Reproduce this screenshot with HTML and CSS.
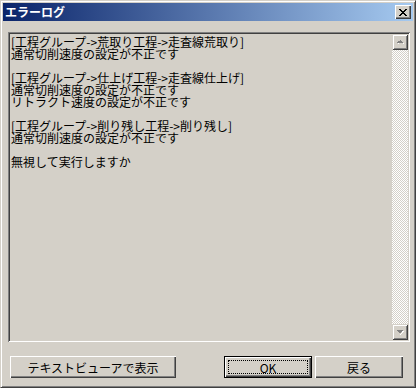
FILE: index.html
```html
<!DOCTYPE html>
<html lang="ja">
<head>
<title>エラーログ</title>
<meta http-equiv="Content-Type" content="text/html; charset=utf-8" />
<link rel="stylesheet" href="styles.css">
</head>
<body>
<div class="window">
	<div class="title">
		<span class="caption">エラーログ</span>
		<span class="close">
			<svg width="8" height="7" viewBox="0 0 8 7" shape-rendering="crispEdges"><path fill="#000" d="M0 0h2v1h-2zM6 0h2v1h-2zM1 1h2v1h-2zM5 1h2v1h-2zM2 2h2v1h-2zM4 2h2v1h-2zM3 3h2v1h-2zM2 4h2v1h-2zM4 4h2v1h-2zM1 5h2v1h-2zM5 5h2v1h-2zM0 6h2v1h-2zM6 6h2v1h-2z"/></svg>
		</span>
	</div>
	<div class="body">
		<div class="log">
			<div class="text">
				<p>[工程グループ-&gt;荒取り工程-&gt;走査線荒取り]<br>通常切削速度の設定が不正です</p>
				<p>[工程グループ-&gt;仕上げ工程-&gt;走査線仕上げ]<br>通常切削速度の設定が不正です<br>リトラクト速度の設定が不正です</p>
				<p>[工程グループ-&gt;削り残し工程-&gt;削り残し]<br>通常切削速度の設定が不正です</p>
				<p>無視して実行しますか</p>
			</div>
			<div class="scroll">
				<span class="arrow">
					<svg width="7" height="5" viewBox="0 0 7 5" shape-rendering="crispEdges"><path fill="#fff" d="M4 1h1v1h1v1h1v1h-6v-1h1v1h4v-1h-1z"/><path fill="#808080" d="M3 0h1v1h1v1h1v1h-6v-1h1v-1h1z"/></svg>
				</span>
				<span class="track"></span>
				<span class="arrow">
					<svg width="7" height="5" viewBox="0 0 7 5" shape-rendering="crispEdges"><path fill="#fff" d="M1 1h6v1h-1v1h-1v1h-1v1h-1v-1h1v-1h1v-1h1z"/><path fill="#808080" d="M0 0h6v1h-1v1h-1v1h-2v-1h-1v-1h-1z"/></svg>
				</span>
			</div>
		</div>
		<div class="buttons">
			<span class="btn view">テキストビューアで表示</span>
			<span class="btn ok"><span class="focus">OK</span></span>
			<span class="btn back">戻る</span>
		</div>
	</div>
</div>
</body>
</html>
```
FILE: styles.css
```css
* {margin:0;padding:0;box-sizing:border-box;}
body {background:#d4d0c8;font-family:"Noto Sans CJK JP","Liberation Sans",sans-serif;font-size:12px;color:#000;}
.window {width:416px;height:388px;padding:2px;display:flex;flex-direction:column;background:#d4d0c8;border:1px solid;border-color:#d4d0c8 #404040 #404040 #d4d0c8;box-shadow:inset 1px 1px #fff,inset -1px -1px #808080;}
.title {height:18px;padding:0 2px;display:flex;align-items:center;justify-content:space-between;background:linear-gradient(to right,#0a246a,#a6caf0);}
.caption {color:#fff;font-weight:700;font-size:12px;line-height:18px;}
.close {width:16px;height:14px;display:flex;align-items:center;justify-content:center;background:#d4d0c8;box-shadow:inset 1px 1px #fff,inset -1px -1px #404040,inset -2px -2px #808080;}
.close svg {display:block;margin-left:-1px;}
.body {flex:1;padding:11px 3px 0 5px;display:flex;flex-direction:column;}
.log {height:310px;padding:2px;display:flex;box-shadow:inset 1px 1px #808080,inset -1px -1px #fff,inset 2px 2px #404040,inset -2px -2px #d4d0c8;}
.text {flex:1;padding:2px 1px;line-height:12px;font-size:12px;}
.text p {margin-bottom:12px;white-space:nowrap;}
.scroll {width:16px;display:flex;flex-direction:column;}
.arrow {height:16px;display:flex;align-items:center;justify-content:center;background:#d4d0c8;box-shadow:inset 1px 1px #d4d0c8,inset -1px -1px #404040,inset 2px 2px #fff,inset -2px -2px #808080;}
.track {flex:1;background:repeating-conic-gradient(#fff 0 25%,#d4d0c8 0 50%) 0 0/2px 2px;}
.buttons {margin-top:14px;display:flex;align-items:center;}
.btn {height:22px;display:flex;align-items:center;justify-content:center;font-size:12px;background:#d4d0c8;box-shadow:inset 1px 1px #fff,inset -1px -1px #404040,inset -2px -2px #808080;}
.view {width:166px;margin-left:2px;margin-right:auto;}
.ok {width:88px;margin-right:3px;border:1px solid #000;box-shadow:inset 1px 1px #fff,inset -1px -1px #404040,inset -2px -2px #808080;padding:3px;}
.focus {width:100%;height:100%;display:flex;align-items:center;justify-content:center;border:1px dotted #000;}
.back {width:88px;margin-right:7px;}
```
